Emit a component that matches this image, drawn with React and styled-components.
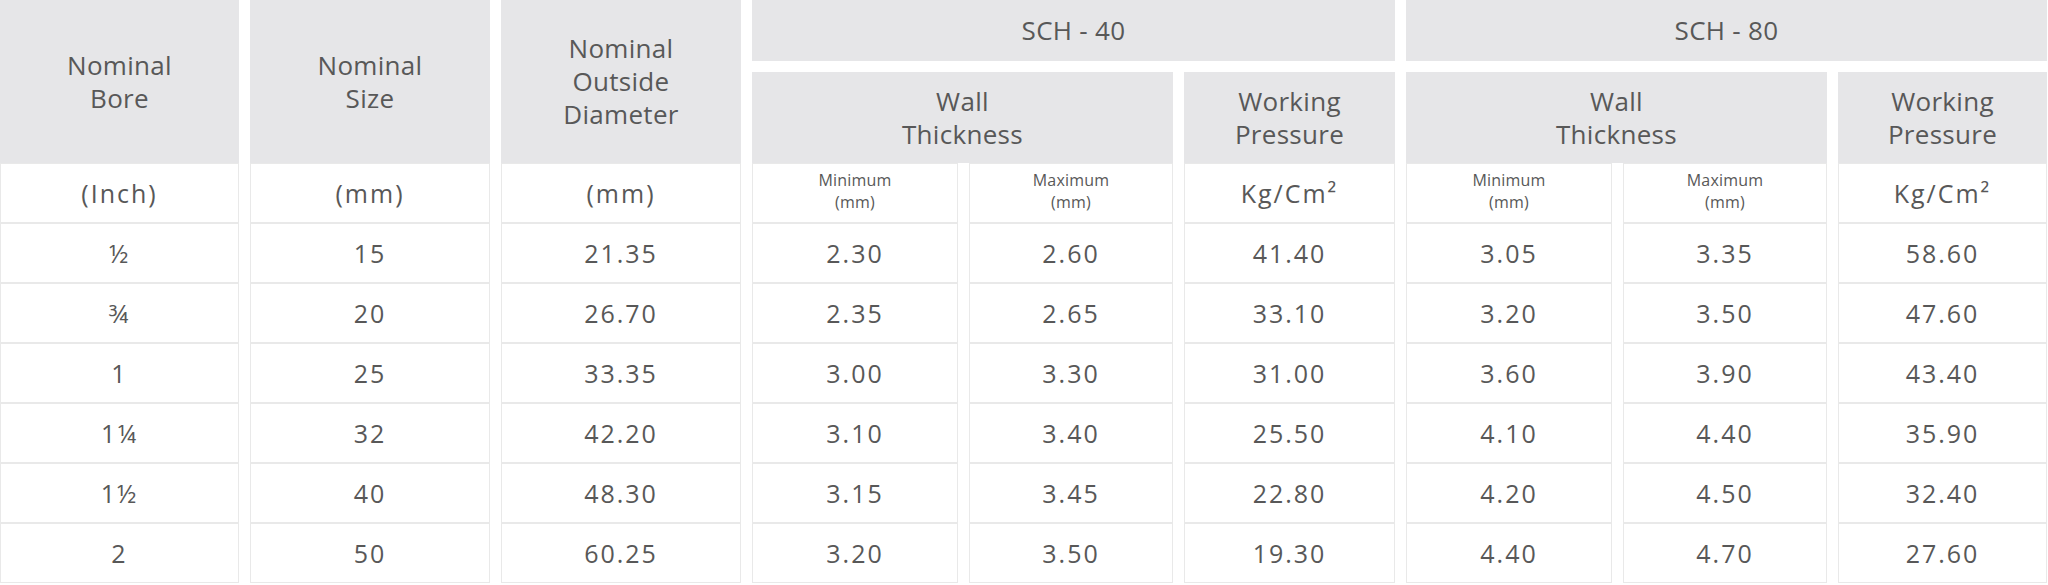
import React from "react";
import styled, { createGlobalStyle } from "styled-components";

const GlobalStyle = createGlobalStyle`
  html, body { margin: 0; padding: 0; background: #ffffff; }
  body { font-family: "Open Sans", "DejaVu Sans", sans-serif; color: #5a5a5a; }
`;

const COLS = "239px 240px 240px 206px 204px 211px 206px 204px 209px";

const Table = styled.div`
  width: 2048px;
  display: flex;
  flex-direction: column;
`;

const Head = styled.div`
  display: grid;
  grid-template-columns: ${COLS};
  grid-template-rows: 61px 91px;
  column-gap: 11px;
  row-gap: 11px;
`;

const HeadCell = styled.div`
  background: #e6e6e8;
  display: flex;
  align-items: center;
  justify-content: center;
  text-align: center;
  font-size: 26px;
  line-height: 33px;
  letter-spacing: 0.3px;
  color: #585858;
  grid-column: ${(p) => p.$col || "auto"};
  grid-row: ${(p) => p.$row || "auto"};
`;

const Body = styled.div`
  display: grid;
  grid-template-columns: ${COLS};
  grid-auto-rows: 60px;
  column-gap: 11px;
`;

const Cell = styled.div`
  background: #ffffff;
  border: 1px solid #e9e9e9;
  display: flex;
  align-items: center;
  justify-content: center;
  text-align: center;
  color: #585858;
  font-size: ${(p) => (p.$small ? "16px" : p.$unit ? "25px" : "25px")};
  line-height: ${(p) => (p.$small ? "22px" : "30px")};
  letter-spacing: ${(p) => (p.$small ? "0.2px" : p.$unit ? "2px" : "2px")};
  padding-bottom: ${(p) => (p.$small ? "4px" : "0")};
  box-sizing: border-box;
`;

const rows = [
  ["½", "15", "21.35", "2.30", "2.60", "41.40", "3.05", "3.35", "58.60"],
  ["¾", "20", "26.70", "2.35", "2.65", "33.10", "3.20", "3.50", "47.60"],
  ["1", "25", "33.35", "3.00", "3.30", "31.00", "3.60", "3.90", "43.40"],
  ["1¼", "32", "42.20", "3.10", "3.40", "25.50", "4.10", "4.40", "35.90"],
  ["1½", "40", "48.30", "3.15", "3.45", "22.80", "4.20", "4.50", "32.40"],
  ["2", "50", "60.25", "3.20", "3.50", "19.30", "4.40", "4.70", "27.60"],
];

const Small = ({ label }) => (
  <Cell $small>
    {label}
    <br />
    (mm)
  </Cell>
);

export default function App() {
  return (
    <>
      <GlobalStyle />
      <Table>
        <Head>
          <HeadCell $col="1" $row="1 / 3">
            Nominal
            <br />
            Bore
          </HeadCell>
          <HeadCell $col="2" $row="1 / 3">
            Nominal
            <br />
            Size
          </HeadCell>
          <HeadCell $col="3" $row="1 / 3">
            Nominal
            <br />
            Outside
            <br />
            Diameter
          </HeadCell>
          <HeadCell $col="4 / 7" $row="1">
            SCH - 40
          </HeadCell>
          <HeadCell $col="7 / 10" $row="1">
            SCH - 80
          </HeadCell>
          <HeadCell $col="4 / 6" $row="2">
            Wall
            <br />
            Thickness
          </HeadCell>
          <HeadCell $col="6" $row="2">
            Working
            <br />
            Pressure
          </HeadCell>
          <HeadCell $col="7 / 9" $row="2">
            Wall
            <br />
            Thickness
          </HeadCell>
          <HeadCell $col="9" $row="2">
            Working
            <br />
            Pressure
          </HeadCell>
        </Head>
        <Body>
          <Cell $unit>(Inch)</Cell>
          <Cell $unit>(mm)</Cell>
          <Cell $unit>(mm)</Cell>
          <Small label="Minimum" />
          <Small label="Maximum" />
          <Cell $unit>Kg/Cm²</Cell>
          <Small label="Minimum" />
          <Small label="Maximum" />
          <Cell $unit>Kg/Cm²</Cell>
          {rows.map((r, i) =>
            r.map((v, j) => <Cell key={`${i}-${j}`}>{v}</Cell>)
          )}
        </Body>
      </Table>
    </>
  );
}
